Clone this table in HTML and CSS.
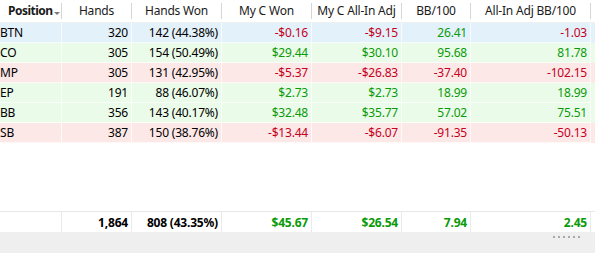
FILE: index.html
```html
<!DOCTYPE html>
<html>
<head>
<meta charset="utf-8">
<link rel="stylesheet" href="styles.css">
</head>
<body>
<div class="grid">
  <div class="row head">
    <div class="hc first">Position<span class="arrow"></span></div>
    <div class="hc">Hands</div>
    <div class="hc">Hands Won</div>
    <div class="hc">My C Won</div>
    <div class="hc">My C All-In Adj</div>
    <div class="hc">BB/100</div>
    <div class="hc">All-In Adj BB/100</div>
  </div>
  <div class="body">
    <div class="row blue">
      <div class="c l">BTN</div><div class="c">320</div><div class="c">142 (44.38%)</div><div class="c neg">-$0.16</div><div class="c neg">-$9.15</div><div class="c pos">26.41</div><div class="c neg">-1.03</div>
    </div>
    <div class="row green">
      <div class="c l">CO</div><div class="c">305</div><div class="c">154 (50.49%)</div><div class="c pos">$29.44</div><div class="c pos">$30.10</div><div class="c pos">95.68</div><div class="c pos">81.78</div>
    </div>
    <div class="row pink">
      <div class="c l">MP</div><div class="c">305</div><div class="c">131 (42.95%)</div><div class="c neg">-$5.37</div><div class="c neg">-$26.83</div><div class="c neg">-37.40</div><div class="c neg">-102.15</div>
    </div>
    <div class="row green">
      <div class="c l">EP</div><div class="c">191</div><div class="c">88 (46.07%)</div><div class="c pos">$2.73</div><div class="c pos">$2.73</div><div class="c pos">18.99</div><div class="c pos">18.99</div>
    </div>
    <div class="row green">
      <div class="c l">BB</div><div class="c">356</div><div class="c">143 (40.17%)</div><div class="c pos">$32.48</div><div class="c pos">$35.77</div><div class="c pos">57.02</div><div class="c pos">75.51</div>
    </div>
    <div class="row pink">
      <div class="c l">SB</div><div class="c">387</div><div class="c">150 (38.76%)</div><div class="c neg">-$13.44</div><div class="c neg">-$6.07</div><div class="c neg">-91.35</div><div class="c neg">-50.13</div>
    </div>
  </div>
  <div class="row foot">
    <div class="c"></div><div class="c">1,864</div><div class="c">808 (43.35%)</div><div class="c pos">$45.67</div><div class="c pos">$26.54</div><div class="c pos">7.94</div><div class="c pos">2.45</div>
  </div>
</div>
<div class="status">
  <div class="grip"><i></i><i></i><i></i><i></i><i></i><i></i></div>
</div>
</body>
</html>
```
FILE: styles.css
```css
html, body {
  margin: 0;
  padding: 0;
  background: #ffffff;
}
body {
  width: 595px;
  height: 253px;
  overflow: hidden;
  font-family: "Noto Sans", "Open Sans", sans-serif;
  font-size: 12px;
  letter-spacing: -0.2px;
  color: #000;
  display: flex;
  flex-direction: column;
}
.grid {
  width: 595px;
  height: 232px;
  display: flex;
  flex-direction: column;
}
.row {
  display: grid;
  grid-template-columns: 62px 70px 90px 90px 90px 69px 120px;
  height: 20px;
}
.head {
  height: 22px;
  border-bottom: 1px solid #f0f0f0;
}
.hc {
  display: flex;
  align-items: center;
  justify-content: center;
  border-right: 1px solid #d5d5d5;
  margin: 3px 0 3px 0;
  color: #1a1a1a;
  white-space: nowrap;
  line-height: 16px;
}
.hc.first {
  justify-content: flex-start;
  padding-left: 8px;
  font-weight: bold;
  letter-spacing: -0.5px;
}
.arrow {
  width: 0;
  height: 0;
  border-left: 3px solid transparent;
  border-right: 3px solid transparent;
  border-top: 3px solid #7a7a7a;
  margin-left: 1px;
  margin-top: 4px;
}
.body {
  flex: 1;
}
.c {
  display: flex;
  align-items: center;
  justify-content: flex-end;
  padding-right: 3px;
  border-right: 1px solid rgba(255,255,255,0.7);
  border-bottom: 1px solid rgba(255,255,255,0.7);
  white-space: nowrap;
  line-height: 19px;
}
.c.l {
  justify-content: flex-start;
  padding-left: 0;
}
.blue { background: #e3f1fb; }
.green { background: #ebfbe9; }
.pink { background: #fde8e8; }
.neg { color: #c4001c; }
.pos { color: #0a9a0a; }
.foot {
  border-top: 1px solid #e8e8e8;
  font-weight: bold;
}
.foot .c {
  border-right: 1px solid #eaeaea;
  border-bottom: none;
}
.status {
  flex: 1;
  background: #efefef;
  position: relative;
}
.grip {
  position: absolute;
  left: 553px;
  top: 4px;
  display: flex;
  gap: 3px;
}
.grip i {
  display: block;
  width: 2px;
  height: 2px;
  background: #a8a8a8;
}
```
